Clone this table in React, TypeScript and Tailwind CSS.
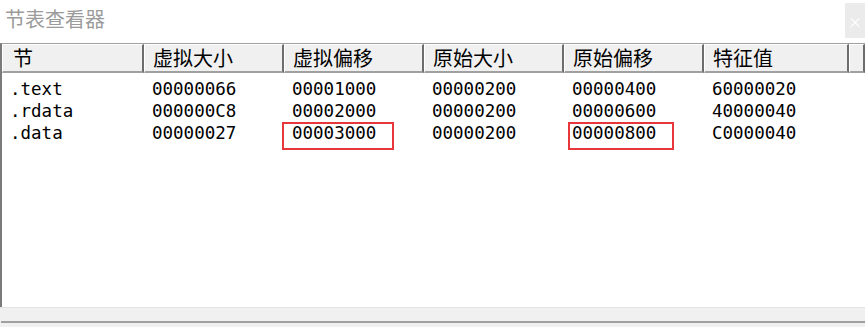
import React from 'react';

type Row = string[];

const columns = ['节', '虚拟大小', '虚拟偏移', '原始大小', '原始偏移', '特征值', ''];

const rows: Row[] = [
  ['.text', '00000066', '00001000', '00000200', '00000400', '60000020'],
  ['.rdata', '000000C8', '00002000', '00000200', '00000600', '40000040'],
  ['.data', '00000027', '00003000', '00000200', '00000800', 'C0000040'],
];

// cells that get a red marker frame: [row, col]
const marked = ['2-2', '2-4'];

const grid = 'grid grid-cols-[142px_140px_140px_140px_140px_145px_1fr]';

function HeaderCell({ label, first }: { label: string; first?: boolean }) {
  return (
    <div
      className={`h-[29px] bg-[#f0f0f0] border-l border-t border-white border-r-2 border-r-[#6d6d6d] border-b-2 border-b-[#a0a0a0] flex items-center ${
        first ? 'pl-[10px]' : 'pl-[8px]'
      }`}
    >
      <span className="text-[20px] leading-none text-black">{label}</span>
    </div>
  );
}

export default function App() {
  return (
    <div
      className="w-[865px] h-[327px] bg-white overflow-hidden flex flex-col"
      style={{ fontFamily: '"Noto Sans CJK SC", "Noto Sans", sans-serif' }}
    >
      {/* title bar */}
      <div className="h-[43px] flex justify-between items-start shrink-0">
        <span className="ml-[5px] mt-[6px] text-[20px] leading-[26px] text-[#9b9b9b]">节表查看器</span>
        <div className="mt-[3px] w-[20px] h-[35px] bg-[#ebebeb] flex items-center justify-end pr-[3px]">
          <span className="text-white text-[14px] leading-none">×</span>
        </div>
      </div>

      {/* list view */}
      <div className="flex-1 flex flex-col border-t border-[#a0a0a0] border-l-2 border-l-[#7a7a7a] min-h-0">
        <div className={grid}>
          {columns.map((c, i) => (
            <HeaderCell key={i} label={c} first={i === 0} />
          ))}
        </div>
        <div className="flex-1 pt-[6px]">
          {rows.map((r, ri) => (
            <div key={ri} className={`${grid} h-[22px]`}>
              {r.map((v, ci) => (
                <div key={ci} className="relative flex items-center pl-[8px]">
                  <span
                    className="text-[17.5px] leading-none text-black"
                    style={{ fontFamily: '"DejaVu Sans Mono", "Liberation Mono", monospace' }}
                  >
                    {v}
                  </span>
                  {marked.includes(`${ri}-${ci}`) && (
                    <span
                      className={`absolute top-[-1px] h-[28px] border-2 border-[#e8373a] ${
                        ci === 2 ? 'left-[-2px] w-[112px]' : 'left-[4px] w-[106px]'
                      }`}
                    />
                  )}
                </div>
              ))}
            </div>
          ))}
        </div>
      </div>

      {/* bottom bar */}
      <div className="h-[20px] shrink-0 border-t border-[#e3e3e3] bg-[#f0f0f0] flex flex-col">
        <div className="h-[13px]" />
        <div className="h-[2px] bg-[#a0a0a0] ml-[1px]" />
      </div>
    </div>
  );
}
